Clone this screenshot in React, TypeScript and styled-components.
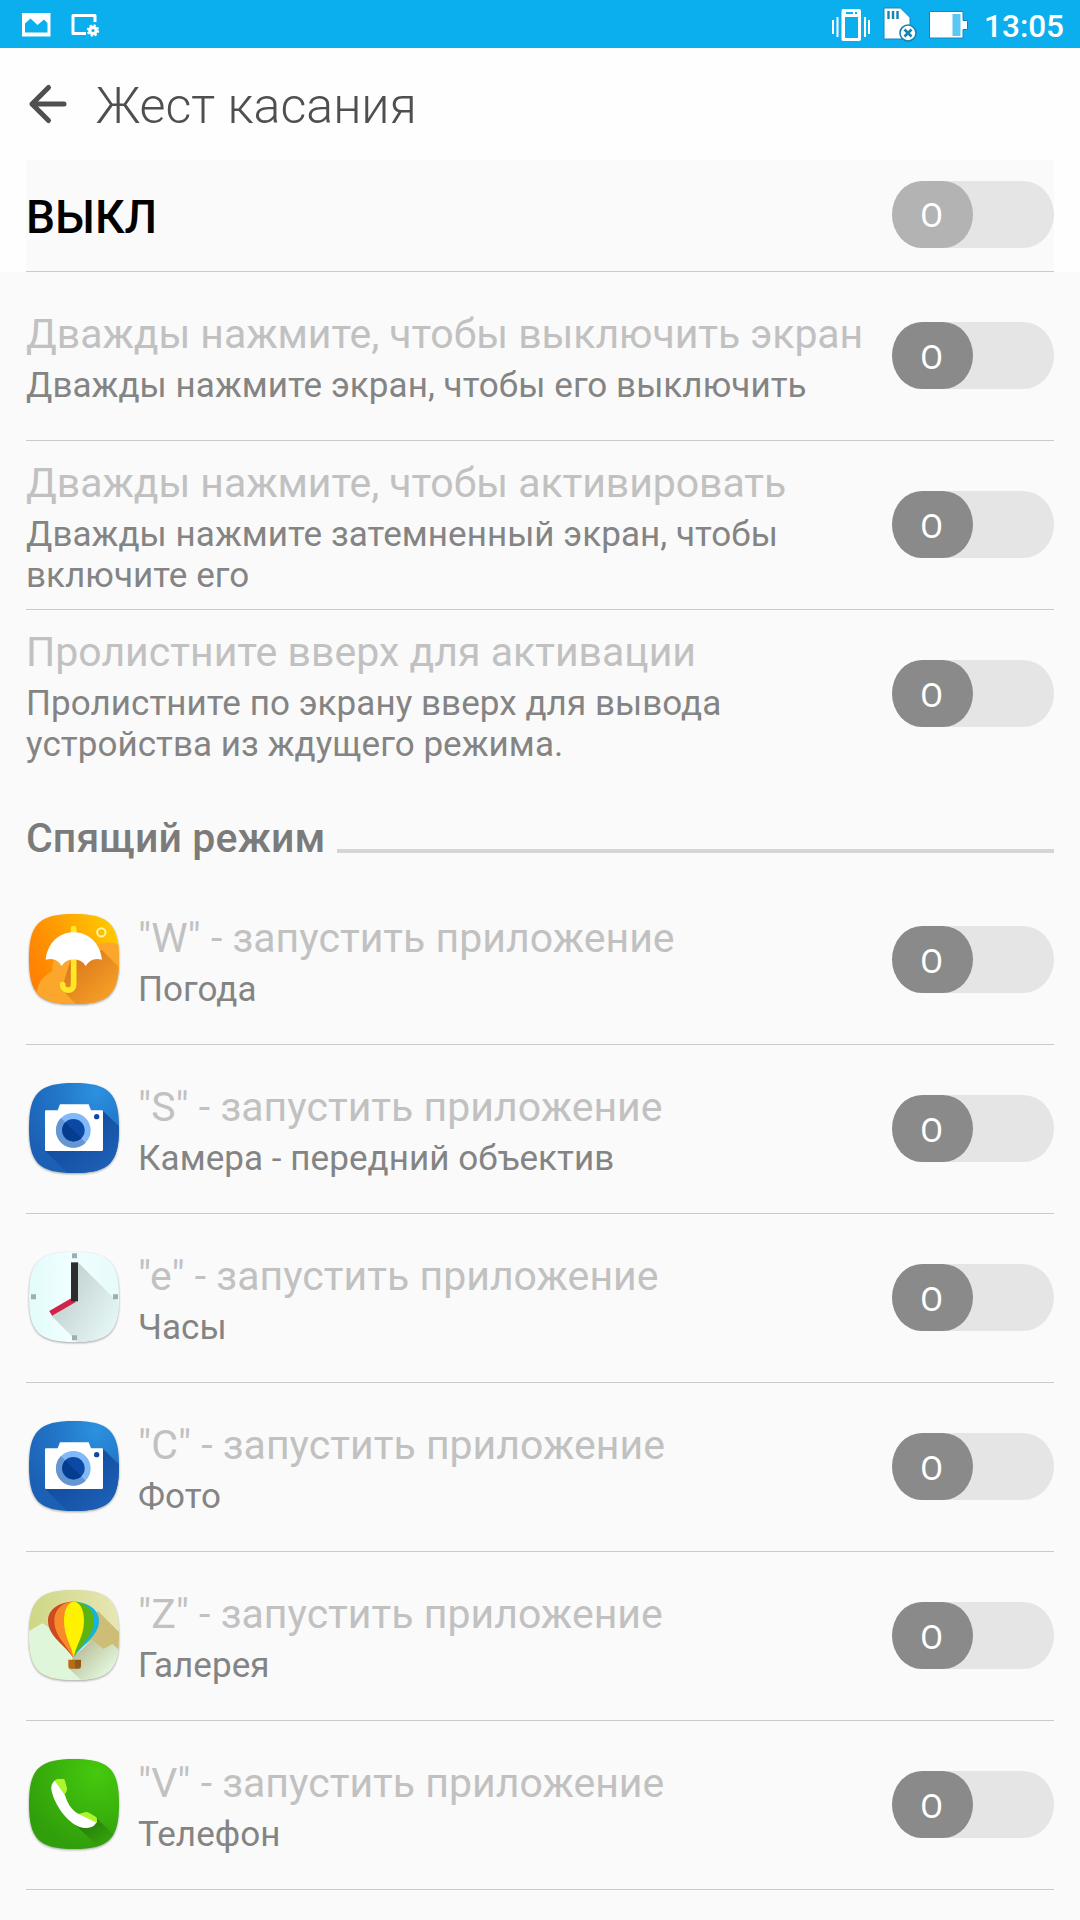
import styled, { createGlobalStyle } from "styled-components";
import type { ReactNode } from "react";

const GlobalStyle = createGlobalStyle`
  body {
    margin: 0;
    background-color: #fafafa;
    font-family: Roboto, "Noto Sans", sans-serif;
  }
`

const Page = styled.div`
  width: 1080px;
  height: 1920px;
  overflow: hidden;
  background-color: #fafafa;
`

const StatusBar = styled.div`
  display: flex;
  align-items: center;
  justify-content: space-between;
  height: 48px;
  padding: 0 16px 0 20px;
  background-color: #0cafee;
`

const StatusGroup = styled.div<{ $gap: number }>`
  display: flex;
  align-items: center;
  gap: ${p => p.$gap}px;

  svg {
    display: block;
  }
`

const Clock = styled.span`
  color: white;
  font-size: 31.5px;
  font-weight: 500;
  line-height: 36px;
  margin: 6px 0 0 3px;
`

const TopArea = styled.div`
  background-color: #fefefe;
`

const Header = styled.div`
  display: flex;
  align-items: center;
  height: 112px;
  padding-left: 26px;
`

const HeaderTitle = styled.h1`
  margin: 4px 0 0 26px;
  color: #4f4f4f;
  font-size: 50.2px;
  font-weight: 300;
  line-height: 60px;
`

const MasterRow = styled.div`
  display: flex;
  align-items: center;
  justify-content: space-between;
  box-sizing: border-box;
  height: 112px;
  margin: 0 26px;
  padding-bottom: 2px;
  border-bottom: 1px solid #cacaca;
  background-color: #fafafa;
`

const MasterLabel = styled.div`
  margin-top: 5px;
  color: black;
  font-size: 46px;
  font-weight: 500;
  line-height: 54px;
`

const Row = styled.div<{ $last?: boolean }>`
  display: flex;
  align-items: center;
  box-sizing: border-box;
  height: 169px;
  margin: 0 26px;
  border-bottom: 1px solid ${p => (p.$last ? "transparent" : "#cacaca")};
`

const AppIcon = styled.svg`
  display: block;
  flex: none;
  width: 90px;
  height: 90px;
  margin: 0 19px 2px 3px;
  overflow: visible;
  filter: drop-shadow(0 1px 1px rgba(0, 0, 0, 0.35));
`

const RowText = styled.div`
  flex: 1;
  padding-top: 3px;
  white-space: pre-line;
`

const RowTitle = styled.div<{ $tight?: boolean }>`
  color: #c1c1c1;
  font-size: 41px;
  line-height: 50px;
  letter-spacing: ${p => (p.$tight ? "-0.06px" : "0.02px")};
  white-space: nowrap;
`

const RowSummary = styled.div`
  margin-top: 6px;
  color: #848484;
  font-size: 35px;
  line-height: 41px;
  letter-spacing: 0.06px;
`

const Track = styled.div`
  flex: none;
  width: 162px;
  height: 67px;
  margin-bottom: 1px;
  border-radius: 31px / 33.5px;
  background-color: #e5e5e5;
`

const Thumb = styled.div<{ $light?: boolean }>`
  display: flex;
  align-items: center;
  justify-content: center;
  box-sizing: border-box;
  width: 81px;
  height: 67px;
  padding: 3px 2px 0 0;
  border-radius: 30px / 33.5px;
  background-color: ${p => (p.$light ? "#b3b3b3" : "#8a8a8a")};
  color: white;
  font-size: 33px;
`

const Category = styled.div`
  display: flex;
  align-items: flex-end;
  box-sizing: border-box;
  height: 97px;
  margin: 0 26px;
  padding-bottom: 23px;
`

const CategoryLabel = styled.div`
  color: #7b7b7b;
  font-size: 41px;
  font-weight: 500;
  line-height: 48px;
  letter-spacing: 0.1px;
  margin-bottom: -9px;
`

const CategoryLine = styled.div`
  flex: 1;
  height: 4px;
  margin-left: 12px;
  background-color: #d5d5d5;
`

const TILE = "M0 135C0 30 30 0 135 0S270 30 270 135 240 270 135 270 0 240 0 135Z"

function Tile({ id, children }: { id: string, children: ReactNode }) {
  return (
    <AppIcon viewBox="0 0 270 270">
      <clipPath id={`${id}-clip`}>
        <path d={TILE} />
      </clipPath>
      <g clipPath={`url(#${id}-clip)`}>{children}</g>
    </AppIcon>
  )
}

function WeatherIcon() {
  return (
    <Tile id="weather">
      <linearGradient id="weather-bg" x1="0" y1="0.5" x2="0.9" y2="0.1">
        <stop offset="0" stopColor="#ff8203" />
        <stop offset="0.4" stopColor="#ff9a02" />
        <stop offset="1" stopColor="#ffc800" />
      </linearGradient>
      <linearGradient id="weather-shade" x1="0.2" y1="0.2" x2="0.8" y2="0.8">
        <stop offset="0" stopColor="#dc7a1c" />
        <stop offset="1" stopColor="#f39c26" />
      </linearGradient>
      <rect width="270" height="270" fill="url(#weather-bg)" />
      <path d="M20 270C20 205 45 185 70 172C66 130 95 115 130 115L190 110C195 88 240 78 270 92V270Z" fill="#fca62b" />
      <path d="M219 108L270 160V270H140L98 226L125 138Z" fill="url(#weather-shade)" />
      <circle cx="217" cy="55" r="12.5" fill="none" stroke="#fff4a3" strokeWidth="6" />
      <path d="M134 44V58M134 130V212C134 234 101 234 101 212" fill="none" stroke="#ffe926" strokeWidth="17" strokeLinecap="round" />
      <path d="M50 137C56 86 90 55 134 55S213 86 219 137Q187 128 170 156Q158 136 134 136T98 156Q82 128 50 137Z" fill="#fff" />
    </Tile>
  )
}

function CameraIcon({ id }: { id: string }) {
  return (
    <Tile id={id}>
      <radialGradient id={`${id}-bg`} cx="0.75" cy="0.1" r="0.9">
        <stop offset="0" stopColor="#2c92df" />
        <stop offset="0.45" stopColor="#2278ca" />
        <stop offset="1" stopColor="#1c60b5" />
      </radialGradient>
      <linearGradient id={`${id}-shade`} x1="0" y1="0" x2="1" y2="1">
        <stop offset="0.2" stopColor="#10489a" />
        <stop offset="0.85" stopColor="#1c5fb4" />
      </linearGradient>
      <rect width="270" height="270" fill={`url(#${id}-bg)`} />
      <path d="M222 84L270 130V270H115L48 203Z" fill={`url(#${id}-shade)`} />
      <path d="M51 82H86L93 64H179L186 82H219Q222 82 222 85V200Q222 204 218 204H51Q48 204 48 200V85Q48 82 51 82Z" fill="#fff" />
      <circle cx="133" cy="142" r="52" fill="#82b9fa" />
      <path d="M96 105A52 52 0 0 0 170 179Z" fill="#6596d2" />
      <circle cx="133" cy="142" r="34" fill="#0c49a5" />
      <path d="M109 118A34 34 0 0 0 157 166Z" fill="#043d90" />
      <circle cx="203" cy="101" r="8" fill="#0c49a5" />
    </Tile>
  )
}

function ClockIcon() {
  return (
    <Tile id="clock">
      <linearGradient id="clock-bg" x1="0" y1="0" x2="1" y2="0">
        <stop offset="0" stopColor="#e2fbfb" />
        <stop offset="0.45" stopColor="#f0ffff" />
        <stop offset="1" stopColor="#e6fbfa" />
      </linearGradient>
      <linearGradient id="clock-shade" x1="0.2" y1="0.4" x2="0.85" y2="0.85">
        <stop offset="0" stopColor="#c6d6d4" />
        <stop offset="1" stopColor="#e3f5f3" />
      </linearGradient>
      <rect width="270" height="270" fill="url(#clock-bg)" />
      <path d="M147 31L270 154V270H146L68 192L130 140Z" fill="url(#clock-shade)" />
      <path d="M129 4h15v15h-15zM129 250h15v15h-15zM6 127h15v15H6zM252 127h15v15h-15z" fill="#9cb1af" />
      <path d="M65 184L136 143" stroke="#d1244a" strokeWidth="17" />
      <rect x="126" y="31" width="21" height="117" fill="#2d2d30" />
    </Tile>
  )
}

function GalleryIcon() {
  return (
    <Tile id="gallery">
      <linearGradient id="gallery-bg" x1="0" y1="0" x2="1" y2="0">
        <stop offset="0" stopColor="#cfd684" />
        <stop offset="1" stopColor="#e7e7b4" />
      </linearGradient>
      <linearGradient id="gallery-shade" x1="0.1" y1="0.3" x2="0.75" y2="0.8">
        <stop offset="0" stopColor="#b9bf9c" />
        <stop offset="1" stopColor="#e0f4d8" />
      </linearGradient>
      <rect width="270" height="270" fill="url(#gallery-bg)" />
      <path d="M206 62L270 126V190H150Z" fill="#cdbd76" />
      <path d="M0 123L40 100L75 122L133 190L188 151L224 178L250 163L270 180V270H0Z" fill="#dff6da" />
      <path d="M188 151L224 178L250 163L270 180V270H156L118 234L133 200Z" fill="url(#gallery-shade)" />
      <path d="M133 204C110 165 57 140 57 92C57 55 95 35 133 35Z" fill="#cb4a20" />
      <path d="M133 204C115 165 76 140 76 92C76 55 105 35 133 35Z" fill="#f98a2b" />
      <path d="M133 204C156 165 210 140 210 92C210 55 172 35 133 35Z" fill="#13b5dc" />
      <path d="M133 204C151 165 195 140 195 92C195 55 162 35 133 35Z" fill="#5db40f" />
      <path d="M134 204C128 165 105 140 105 92C105 16 165 16 165 92C165 140 140 165 134 204Z" fill="#fff200" />
      <path d="M118 209H136V236H124Q118 236 118 228Z" fill="#b96a12" />
      <path d="M136 209H156V228Q156 236 150 236H136Z" fill="#965711" />
    </Tile>
  )
}

function PhoneIcon() {
  return (
    <Tile id="phone">
      <radialGradient id="phone-bg" cx="0.75" cy="0.15" r="0.85">
        <stop offset="0" stopColor="#45c90d" />
        <stop offset="1" stopColor="#319f0b" />
      </radialGradient>
      <linearGradient id="phone-shade" x1="0.1" y1="0.1" x2="0.9" y2="0.9">
        <stop offset="0.2" stopColor="#27820a" />
        <stop offset="1" stopColor="#36a80c" />
      </linearGradient>
      <rect width="270" height="270" fill="url(#phone-bg)" />
      <path d="M203 178L255 228L208 264L140 198Z" fill="url(#phone-shade)" />
      <path d="M78 64C68 72 65 83 68 97C78 138 112 188 150 203C168 210 186 208 196 199L203 190C203 184 170 165 150 165C138 162 116 140 108 108Z" fill="#fff" />
      <path d="M77 65Q80 60 86 60H104Q107 60 108 66L114 88Q115 92 113 96L107 107Z" fill="#aef52c" />
      <path d="M149 165L167 160Q174 158 180 161L200 173Q204 176 204 180V192Z" fill="#aef52c" />
    </Tile>
  )
}

function StatusLeft() {
  return (
    <StatusGroup $gap={19}>
      <svg width="32" height="26" viewBox="0 0 32 26">
        <path fillRule="evenodd" fill="#fff" d="M2 2H30.500V25.500H2ZM5 21.500H27.500V12L24 8.500L17.500 14L10.500 7.500L5 12.500Z" />
      </svg>
      <svg width="30" height="26" viewBox="0 0 30 26">
        <path d="M15 22.500H2V4.500H24V11" fill="none" stroke="#fff" strokeWidth="3" strokeLinejoin="round" />
        <circle cx="22" cy="19.500" r="3.200" fill="none" stroke="#fff" strokeWidth="3.200" />
        <circle cx="22" cy="19.500" r="5" fill="none" stroke="#fff" strokeWidth="2.400" strokeDasharray="2.100 1.827" />
      </svg>
    </StatusGroup>
  )
}

function StatusRight() {
  return (
    <StatusGroup $gap={12}>
      <svg width="40" height="36" viewBox="0 0 40 36">
        <path fillRule="evenodd" fill="#fff" d="M12 3H28Q30 3 30 5V33Q30 35 28 35H12Q10.500 35 10.500 33V5Q10.500 3 12 3ZM14 11V32H27V11ZM15 6V8H22V6ZM24 6V8H26V6Z" />
        <path d="M2 14V28M6.500 11V31M34 11V31M38 14V28" stroke="#fff" strokeWidth="2" />
      </svg>
      <svg width="34" height="36" viewBox="0 0 34 36">
        <path d="M1 2H17.500L27 11.500V33H1Z" fill="#fff" stroke="#1387b9" strokeWidth="1" />
        <path d="M5.500 5V13M10 5V13M14.500 5V13" stroke="#1383b4" strokeWidth="2.400" />
        <circle cx="25" cy="27" r="8" fill="#fff" stroke="#1383b4" strokeWidth="1.600" />
        <path d="M21.500 23.500L28.500 30.500M28.500 23.500L21.500 30.500" stroke="#1383b4" strokeWidth="2.600" />
      </svg>
      <svg width="40" height="36" viewBox="0 0 40 36">
        <path d="M0.500 5.500H34V14.500H38.500V23.500H34V32H0.500Z" fill="#fff" stroke="#1387b9" strokeWidth="1" />
        <rect x="23.500" y="8" width="8" height="22" fill="#5ac8f3" />
      </svg>
      <Clock>13:05</Clock>
    </StatusGroup>
  )
}

function Switch({ light }: { light?: boolean }) {
  return (
    <Track>
      <Thumb $light={light}>O</Thumb>
    </Track>
  )
}

const gestures = [
  { title: "Дважды нажмите, чтобы выключить экран", summary: "Дважды нажмите экран, чтобы его выключить" },
  { title: "Дважды нажмите, чтобы активировать", summary: "Дважды нажмите затемненный экран, чтобы\nвключите его" },
  { title: "Пролистните вверх для активации", summary: "Пролистните по экрану вверх для вывода\nустройства из ждущего режима." },
]

const apps = [
  { letter: "W", name: "Погода", icon: <WeatherIcon /> },
  { letter: "S", name: "Камера - передний объектив", icon: <CameraIcon id="front" /> },
  { letter: "e", name: "Часы", icon: <ClockIcon /> },
  { letter: "C", name: "Фото", icon: <CameraIcon id="photo" /> },
  { letter: "Z", name: "Галерея", icon: <GalleryIcon /> },
  { letter: "V", name: "Телефон", icon: <PhoneIcon /> },
]

export default function App() {
  return (
    <Page>
      <GlobalStyle />
      <StatusBar>
        <StatusLeft />
        <StatusRight />
      </StatusBar>
      <TopArea>
        <Header>
          <svg width="44" height="44" viewBox="0 0 44 44">
            <path d="M22.500 5.500L6 22L22.500 38.500M6 22H38" fill="none" stroke="#4f4f4f" strokeWidth="5" strokeLinecap="round" strokeLinejoin="round" />
          </svg>
          <HeaderTitle>Жест касания</HeaderTitle>
        </Header>
        <MasterRow>
          <MasterLabel>ВЫКЛ</MasterLabel>
          <Switch light />
        </MasterRow>
      </TopArea>
      {gestures.map((g, i) => (
        <Row key={g.title} $last={i === gestures.length - 1}>
          <RowText>
            <RowTitle $tight={g.title.startsWith("Дважды")}>{g.title}</RowTitle>
            <RowSummary>{g.summary}</RowSummary>
          </RowText>
          <Switch />
        </Row>
      ))}
      <Category>
        <CategoryLabel>Спящий режим</CategoryLabel>
        <CategoryLine />
      </Category>
      {apps.map(a => (
        <Row key={a.letter}>
          {a.icon}
          <RowText>
            <RowTitle>"{a.letter}" - запустить приложение</RowTitle>
            <RowSummary>{a.name}</RowSummary>
          </RowText>
          <Switch />
        </Row>
      ))}
    </Page>
  )
}
